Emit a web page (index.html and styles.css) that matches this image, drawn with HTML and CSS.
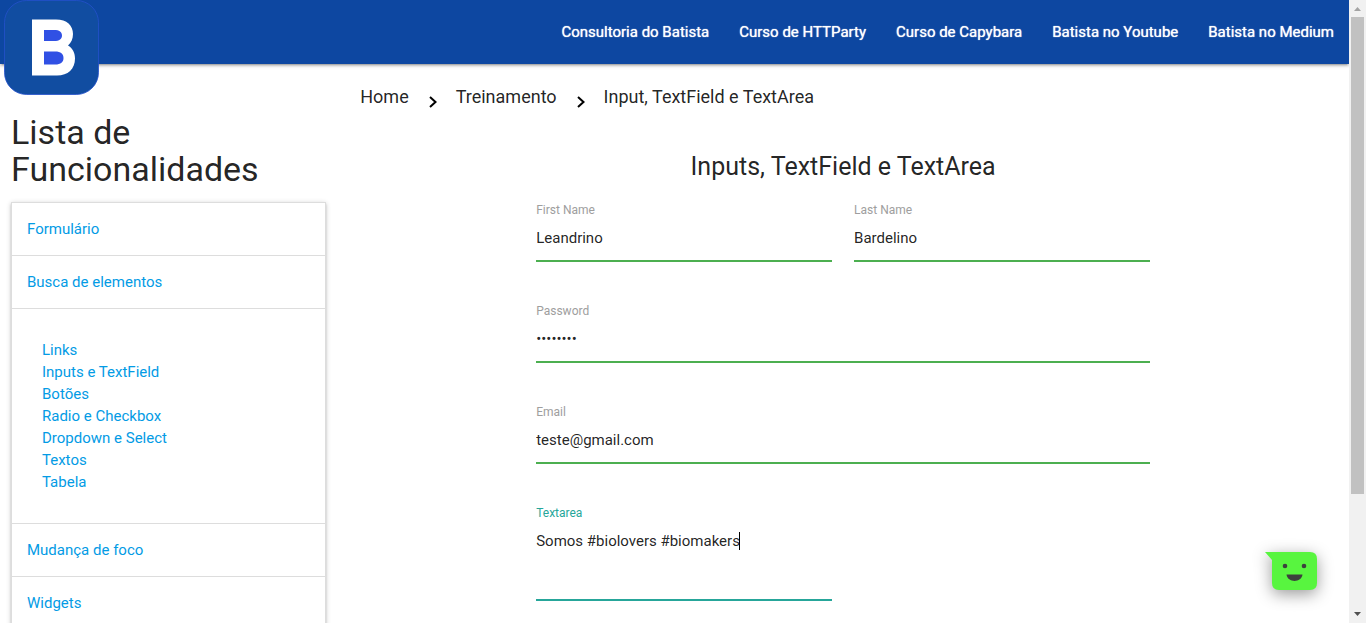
FILE: index.html
```html
<!DOCTYPE html>
<html lang="pt-BR">
<head>
<meta charset="utf-8">
<title>Inputs, TextField e TextArea</title>
<link rel="stylesheet" href="styles.css">
</head>
<body>
<div class="page">
  <header class="navbar">
    <a class="brand" href="#" aria-label="Batista">
      <svg viewBox="0 0 95 95" width="95" height="95" aria-hidden="true">
        <rect x="0.5" y="0.5" width="94" height="94" rx="22" fill="#114da1" stroke="#2450cc" stroke-width="0.8"/>
        <path fill="#fff" d="M28 19.5H52C63 19.5 69 25.500 69 34C69 39 67 43 64 45.500C68.500 48 71 52.500 71 58.500C71 69 64 75.500 53 75.500H28Z"/>
        <path fill="#3050e4" d="M40 30H50C55.500 30 58 32 58 35.500C58 39 55.500 41 50 41H40ZM40 51.500H51C57 51.500 59.500 54 59.500 58C59.500 62 57 64.500 51 64.500H40Z"/>
      </svg>
    </a>
    <nav class="nav-links">
      <a href="#">Consultoria do Batista</a>
      <a href="#">Curso de HTTParty</a>
      <a href="#">Curso de Capybara</a>
      <a href="#">Batista no Youtube</a>
      <a href="#">Batista no Medium</a>
    </nav>
  </header>
  <div class="columns">
    <aside class="sidebar">
      <h4 class="sidebar-title">Lista de Funcionalidades</h4>
      <ul class="collapsible">
        <li><a class="collapsible-header" href="#">Formulário</a></li>
        <li>
          <a class="collapsible-header" href="#">Busca de elementos</a>
          <ul class="collapsible-body">
            <li><a href="#">Links</a></li>
            <li><a href="#">Inputs e TextField</a></li>
            <li><a href="#">Botões</a></li>
            <li><a href="#">Radio e Checkbox</a></li>
            <li><a href="#">Dropdown e Select</a></li>
            <li><a href="#">Textos</a></li>
            <li><a href="#">Tabela</a></li>
          </ul>
        </li>
        <li><a class="collapsible-header" href="#">Mudança de foco</a></li>
        <li><a class="collapsible-header" href="#">Widgets</a></li>
      </ul>
    </aside>
    <main class="content">
      <nav class="breadcrumbs" aria-label="Breadcrumb">
        <a href="#">Home</a>
        <svg class="chevron" viewBox="0 0 8 12" width="8" height="12" aria-hidden="true"><path d="M1 1L6.500 6L1 11"/></svg>
        <a href="#">Treinamento</a>
        <svg class="chevron" viewBox="0 0 8 12" width="8" height="12" aria-hidden="true"><path d="M1 1L6.500 6L1 11"/></svg>
        <a href="#">Input, TextField e TextArea</a>
      </nav>
      <form class="form">
        <h5 class="form-title">Inputs, TextField e TextArea</h5>
        <div class="fields">
          <div class="field">
            <label for="first-name">First Name</label>
            <input id="first-name" type="text" value="Leandrino">
          </div>
          <div class="field">
            <label for="last-name">Last Name</label>
            <input id="last-name" type="text" value="Bardelino">
          </div>
          <div class="field wide">
            <label for="password">Password</label>
            <input id="password" type="password" value="12345678">
          </div>
          <div class="field wide">
            <label for="email">Email</label>
            <input id="email" type="email" value="teste@gmail.com">
          </div>
          <div class="field active">
            <label for="textarea">Textarea</label>
            <textarea id="textarea" spellcheck="false">Somos #biolovers #biomakers</textarea>
            <span class="caret"></span>
          </div>
        </div>
      </form>
    </main>
  </div>
  <button class="chat" type="button" aria-label="Chat">
    <svg viewBox="0 0 54 40" width="54" height="40" aria-hidden="true">
      <path fill="#58f53f" d="M1 1H46Q53 1 53 8V32Q53 39 46 39H15Q8 39 8 32V9Z"/>
      <circle cx="21" cy="15" r="2.300" fill="#3d403d"/>
      <circle cx="40" cy="15" r="2.300" fill="#3d403d"/>
      <path fill="#3d403d" d="M22.500 23.500H38.500C37.500 32 23.500 32 22.500 23.500Z"/>
    </svg>
  </button>
</div>
<div class="scrollbar" aria-hidden="true">
  <svg viewBox="0 0 17 17" width="17" height="17"><path fill="#a3a3a3" d="M5 11H12L8.500 7Z"/></svg>
  <div class="track"><div class="thumb"></div></div>
  <svg viewBox="0 0 17 17" width="17" height="17"><path fill="#505050" d="M5 6H12L8.500 10Z"/></svg>
</div>
</body>
</html>
```
FILE: styles.css
```css
* { box-sizing: border-box; }

body {
  display: flex;
  height: 100vh;
  margin: 0;
  overflow: hidden;
  background: #fff;
  color: rgba(0, 0, 0, 0.87);
  font: 15px/22px Roboto, sans-serif;
}

a { color: #039be5; text-decoration: none; }
ul { list-style: none; margin: 0; padding: 0; }
svg { display: block; }

.page {
  position: relative;
  flex: 1;
  min-width: 0;
  overflow: hidden;
}

.navbar {
  position: relative;
  display: flex;
  justify-content: flex-end;
  height: 64px;
  background: #0d47a1;
  box-shadow: 0 2px 2px rgba(0, 0, 0, 0.14), 0 3px 1px -2px rgba(0, 0, 0, 0.12), 0 1px 5px rgba(0, 0, 0, 0.2);
}

.brand { position: absolute; top: 0; left: 4px; }

.nav-links { display: flex; line-height: 64px; }
.nav-links a { padding: 0 15px; color: #fff; text-shadow: 0 0 1px #fff; }

.columns { display: grid; grid-template-columns: 1fr 3fr; }

.sidebar { padding: 50px 11px 0; }
.sidebar-title { margin: 0 0 14px; font-size: 34px; font-weight: 400; line-height: 37px; }

.collapsible {
  border: 1px solid #ddd;
  border-bottom: 0;
  box-shadow: 0 2px 2px rgba(0, 0, 0, 0.14), 0 3px 1px -2px rgba(0, 0, 0, 0.12), 0 1px 5px rgba(0, 0, 0, 0.2);
}
.collapsible-header { display: block; padding: 15px; border-bottom: 1px solid #ddd; }
.collapsible-body { padding: 30px; border-bottom: 1px solid #ddd; }

.content { padding: 20px 11px 0; }

.breadcrumbs { display: flex; align-items: center; padding-left: 12px; font-size: 18px; line-height: 26px; }
.breadcrumbs a { color: rgba(0, 0, 0, 0.87); }
.chevron { margin: 10px 19px 0 20px; fill: none; stroke: #000; stroke-width: 2; }

.form { width: 66.667%; margin: 43px auto 0; padding: 0 23px; }
.form-title { margin: 0 0 23px; font-size: 25px; font-weight: 400; line-height: 28px; text-align: center; }
.fields { display: grid; grid-template-columns: 1fr 1fr; gap: 43px 22px; }

.field { position: relative; display: flex; flex-direction: column; }
.wide { grid-column: 1 / -1; }
.field label { color: #9e9e9e; font-size: 12px; line-height: 12px; }
.field input,
.field textarea {
  width: 100%;
  margin: 0;
  border: 0;
  border-bottom: 2px solid #4caf50;
  outline: 0;
  background: transparent;
  color: rgba(0, 0, 0, 0.87);
  font: 15px/20px Roboto, sans-serif;
}
.field input { height: 46px; padding: 0; }
.field textarea { height: 82px; padding: 12px 0; border-color: #26a69a; resize: none; overflow: hidden; }
.active label { color: #26a69a; }
.caret { position: absolute; top: 25px; left: 203px; width: 1px; height: 18px; background: #000; }

.chat {
  position: absolute;
  right: 31px;
  bottom: 32px;
  padding: 0;
  border: 0;
  background: none;
  filter: drop-shadow(0 4px 8px rgba(0, 0, 0, 0.4));
}

.scrollbar { display: flex; flex-direction: column; width: 17px; background: #f1f1f1; }
.track { flex: 1; padding: 0 2px; }
.thumb { height: 81%; background: #c1c1c1; }
```
